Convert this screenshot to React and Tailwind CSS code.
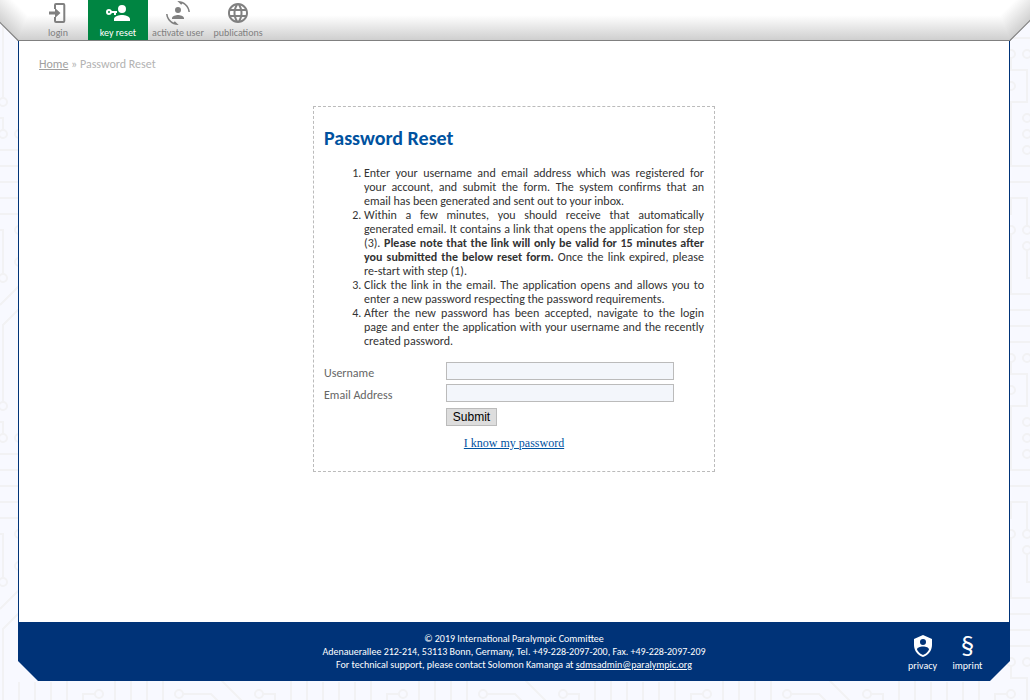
import React from "react";
import { MdLanguage } from "react-icons/md";

const KEY =
  "M11,10V12H10V14H8V12H5.83C5.42,13.17 4.31,14 3,14A3,3 0 0,1 0,11A3,3 0 0,1 3,8C4.31,8 5.42,8.83 5.83,10H11M3,10A1,1 0 0,0 2,11A1,1 0 0,0 3,12A1,1 0 0,0 4,11A1,1 0 0,0 3,10M16,14C18.67,14 24,15.34 24,18V20H8V18C8,15.34 13.33,14 16,14M16,12A4,4 0 0,1 12,8A4,4 0 0,1 16,4A4,4 0 0,1 20,8A4,4 0 0,1 16,12Z";
const CONVERT =
  "M7.5,21.5L8.85,20.16L12.66,23.97L12,24C5.71,24 0.56,19.16 0.05,13H1.55C1.91,16.76 4.25,19.94 7.5,21.5M16.5,2.5L15.15,3.84L11.34,0.03L12,0C18.29,0 23.44,4.84 23.95,11H22.45C22.09,7.24 19.75,4.07 16.5,2.5M6,17C6,15 10,13.9 12,13.9C14,13.9 18,15 18,17V18H6V17M15,9A3,3 0 0,1 12,12A3,3 0 0,1 9,9A3,3 0 0,1 12,6A3,3 0 0,1 15,9Z";
const SHIELD =
  "M12,1L3,5V11C3,16.55 6.84,21.74 12,23C17.16,21.74 21,16.55 21,11V5L12,1M12,5A3,3 0 0,1 15,8A3,3 0 0,1 12,11A3,3 0 0,1 9,8A3,3 0 0,1 12,5M17.13,17C15.92,18.85 14.11,20.24 12,20.92C9.89,20.24 8.08,18.85 6.87,17C6.53,16.5 6.24,16 6,15.47C6,13.82 8.71,12.47 12,12.47C15.29,12.47 18,13.79 18,15.47C17.76,16 17.47,16.5 17.13,17Z";
const LOGIN =
  "M8 8V4Q8 2 10 2H17.3Q19.3 2 19.3 4V20Q19.3 22 17.3 22H10Q8 22 8 20V16H10V20H17.3V4H10V8ZM3 10.5H9V7L14.5 12L9 17V13.5H3Z";

const Icon = ({ d }) => (
  <svg viewBox="0 0 24 24" className="size-6 fill-current">
    <path d={d} />
  </svg>
);

const DOTS = [
  [3, 102], [3, 134], [19, 134], [19, 230], [19, 262], [3, 278],
  [99, 54], [115, 54], [99, 86], [115, 118], [115, 134], [115, 150],
  [99, 230], [115, 230], [115, 246],
  [179, 86], [259, 86],
];

function CircuitBackground() {
  return (
    <svg className="absolute inset-0 -z-10 size-full">
      <defs>
        <pattern id="circuit" width="304" height="304" patternUnits="userSpaceOnUse">
          <g fill="none" stroke="#f2f2f4" strokeWidth="2">
            {DOTS.map(([x, y]) => (
              <circle key={`${x}-${y}`} cx={x} cy={y} r="4" />
            ))}
            <path d="M0 118H3V130M0 150H20M0 166H20M0 182H20M0 198H20M0 214H20M0 230H3V274M0 305L20 285M0 1L2 -1M20 4L3 21V98" />
            <path d="M98 6H120M98 22H120M98 38H120M99 58V70H115V102H99V166H120M98 182H120M99 215V198H115V226M99 234V294H120M115 250V278H120" />
            <path d="M19 74V94M35 74V94M51 74V94M67 73V94M95 86H83V94M115 73V94M131 73V94M147 73V94M163 73V94M183 86H211L219 94M221 72L243 94M263 86H275V94M291 73V94" />
          </g>
        </pattern>
      </defs>
      <rect width="100%" height="100%" fill="#f8f9ff" />
      <rect width="100%" height="100%" fill="url(#circuit)" />
    </svg>
  );
}

// Bevelled end of the toolbar, shaded along its diagonal edge.
function Bevel({ id, height }) {
  const cut = 40.5 - height;
  return (
    <svg width="36" height="42" viewBox="0 0 36 42">
      <defs>
        <linearGradient id={id} gradientUnits="userSpaceOnUse" x1={height} y1="40.5" x2={height + 17.5} y2="23">
          <stop offset="0" stopColor="#cfcfcf" />
          <stop offset="1" stopColor="#fff" />
        </linearGradient>
      </defs>
      <path d={`M0 0H${height + 16.6}L${height} 40.5L0 ${cut}Z`} fill={`url(#${id})`} />
      <path d={`M-1 ${cut - 1}L${height} 40.5H36`} fill="none" stroke="#808080" strokeWidth="1.2" />
    </svg>
  );
}

function NavItem({ label, active, children }) {
  return (
    <a className={`flex h-10 w-[60px] flex-col items-center pt-px text-[10px] leading-3 whitespace-nowrap ${active ? "bg-[#008542] text-white" : "text-[#808080]"}`}>
      {children}
      <span className="mt-[2px]">{label}</span>
    </a>
  );
}

function Field({ label }) {
  return (
    <label className="flex h-[22px] items-start text-[#666]">
      <span className="w-[122px] pt-1 leading-[14px]">{label}</span>
      <input className="h-[18px] w-[228px] border border-[#bbb] bg-[#f3f6fb] px-1 outline-none" />
    </label>
  );
}

export default function App() {
  return (
    <div className="relative isolate flex h-[700px] w-[1030px] flex-col overflow-hidden font-[Carlito,Calibri,Lato,sans-serif] text-xs text-[#333]">
      <CircuitBackground />
      <header className="relative h-[41px] shrink-0">
        <div className="absolute inset-0 border-b border-[#808080] bg-[linear-gradient(#fff_38%,#cfcfcf)] [clip-path:polygon(0_0,100%_0,100%_21px,1010px_100%,18px_100%,0_23px)]" />
        <div className="absolute top-0 left-0">
          <Bevel id="bevel-left" height={18} />
        </div>
        <div className="absolute top-0 right-0 -scale-x-100">
          <Bevel id="bevel-right" height={20} />
        </div>
        <nav className="relative flex pl-7">
          <NavItem label="login"><Icon d={LOGIN} /></NavItem>
          <NavItem label="key reset" active><Icon d={KEY} /></NavItem>
          <NavItem label="activate user"><Icon d={CONVERT} /></NavItem>
          <NavItem label="publications"><MdLanguage className="size-6" /></NavItem>
        </nav>
      </header>

      <main className="ml-[18px] h-[581px] w-[992px] shrink-0 border-x border-[#003378] bg-white">
        <div className="pt-4 pl-5 leading-[14px] text-[#b3b3b3]">
          <a className="text-[#a0a0a0] underline">Home</a> » Password Reset
        </div>
        <section className="mt-[35px] ml-[294px] h-[366px] w-[402px] border border-dashed border-[#bbb] px-[10px] pt-[18px]">
          <h1 className="text-xl leading-[26px] font-bold text-[#00529f]">Password Reset</h1>
          <ol className="mt-[15px] list-decimal pl-10 text-justify leading-[14px]">
            <li>Enter your username and email address which was registered for your account, and submit the form. The system confirms that an email has been generated and sent out to your inbox.</li>
            <li>Within a few minutes, you should receive that automatically generated email. It contains a link that opens the application for step (3). <b>Please note that the link will only be valid for 15 minutes after you submitted the below reset form.</b> Once the link expired, please re-start with step (1).</li>
            <li>Click the link in the email. The application opens and allows you to enter a new password respecting the password requirements.</li>
            <li>After the new password has been accepted, navigate to the login page and enter the application with your username and the recently created password.</li>
          </ol>
          <form className="pt-[14px]">
            <Field label="Username" />
            <Field label="Email Address" />
            <button type="button" className="mt-[2px] ml-[122px] block h-[18px] w-[51px] border border-[#bbb] bg-[#ddd] font-['Liberation_Sans',sans-serif] text-xs leading-4 text-black">Submit</button>
          </form>
          <div className="mt-[10px] text-center font-['Liberation_Serif',serif] leading-[14px]">
            <a className="text-[#00529f] underline">I know my password</a>
          </div>
        </section>
      </main>

      <footer className="relative ml-[18px] h-[59px] w-[992px] shrink-0 bg-[#003378] pt-[10px] text-center text-[10px] leading-[13px] text-white [clip-path:polygon(0_0,100%_0,100%_39px,972px_100%,20px_100%,0_39px)]">
        <p>© 2019 International Paralympic Committee</p>
        <p>Adenauerallee 212-214, 53113 Bonn, Germany, Tel. +49-228-2097-200, Fax. +49-228-2097-209</p>
        <p>For technical support, please contact Solomon Kamanga at <a className="underline">sdmsadmin@paralympic.org</a></p>
        <div className="absolute top-3 right-[20px] flex">
          <a className="flex w-[45px] flex-col items-center">
            <Icon d={SHIELD} />
            <span className="mt-px">privacy</span>
          </a>
          <a className="flex w-[45px] flex-col items-center">
            <span className="h-6 text-[27px] leading-6">§</span>
            <span className="mt-px">imprint</span>
          </a>
        </div>
      </footer>
    </div>
  );
}
